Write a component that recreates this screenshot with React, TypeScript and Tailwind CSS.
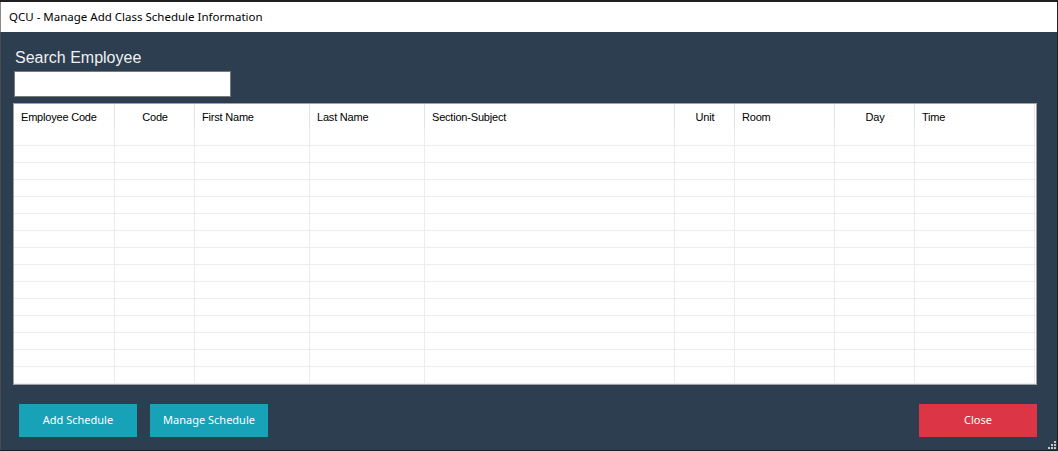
import React from 'react';

const columns = [
  { name: 'Employee Code', w: 'w-[101px]', align: 'text-left' },
  { name: 'Code', w: 'w-[80px]', align: 'text-center' },
  { name: 'First Name', w: 'w-[115px]', align: 'text-left' },
  { name: 'Last Name', w: 'w-[115px]', align: 'text-left' },
  { name: 'Section-Subject', w: 'w-[250px]', align: 'text-left' },
  { name: 'Unit', w: 'w-[60px]', align: 'text-center' },
  { name: 'Room', w: 'w-[100px]', align: 'text-left' },
  { name: 'Day', w: 'w-[80px]', align: 'text-center' },
  { name: 'Time', w: 'w-[120px]', align: 'text-left' },
];

const rows = Array.from({ length: 15 }, (_, i) => i);

const uiFont = { fontFamily: '"Noto Sans", sans-serif' };

export default function App() {
  return (
    <div className="w-[1058px] h-[451px] flex flex-col bg-[#1f1f1f] overflow-hidden" style={{ fontFamily: '"Liberation Sans", Arial, sans-serif' }}>
      <div className="h-[2px] shrink-0" />
      <div className="h-[30px] shrink-0 bg-white border-l border-[#8a8a8a] mr-[1px] flex items-center pl-[8px]">
        <span className="text-[11.5px] text-black" style={uiFont}>
          QCU - Manage Add Class Schedule Information
        </span>
      </div>
      <div className="flex-1 bg-[#2c3e50] border-l border-[#4a4a4a] mr-[1px] mb-[1px] relative flex flex-col pl-[12px] pr-[20px]">
        <div className="mt-[15px] ml-[2px] text-[16px] leading-[22px] text-[#f0f0f0]">Search Employee</div>
        <div className="mt-[2px] ml-[1px] w-[217px] h-[26px] bg-white border border-[#7a7a7a]" />
        <div className="mt-[6px] w-[1024px] h-[282px] bg-white border border-[#a0a0a0] flex flex-col overflow-hidden">
          <div className="flex h-[25px] shrink-0">
            {columns.map((c) => (
              <div key={c.name} className={`${c.w} shrink-0 border-r border-[#e3e3e3] ${c.align} pl-[7px] pr-[6px] pt-[7px] text-[11px] tracking-[-0.2px] text-black leading-[13px]`}>
                {c.name}
              </div>
            ))}
          </div>
          {rows.map((r) => (
            <div key={r} className="flex h-[17px] shrink-0 border-b border-[#ececec]">
              {columns.map((c) => (
                <div key={c.name} className={`${c.w} shrink-0 border-r border-[#ececec]`} />
              ))}
            </div>
          ))}
        </div>
        <div className="mt-[19px] flex items-center pl-[6px]" style={uiFont}>
          <button className="w-[118px] h-[33px] bg-[#17a2b8] text-white text-[11px]">Add Schedule</button>
          <button className="ml-[13px] w-[118px] h-[33px] bg-[#17a2b8] text-white text-[11px]">Manage Schedule</button>
          <button className="ml-auto w-[118px] h-[33px] bg-[#dc3545] text-white text-[11px]">Close</button>
        </div>
        <svg className="absolute right-[1px] bottom-[1px]" width="8" height="8" viewBox="0 0 8 8">
          <rect x="6" y="0" width="2" height="2" fill="#c8c8c8" />
          <rect x="3" y="3" width="2" height="2" fill="#c8c8c8" />
          <rect x="6" y="3" width="2" height="2" fill="#c8c8c8" />
          <rect x="0" y="6" width="2" height="2" fill="#c8c8c8" />
          <rect x="3" y="6" width="2" height="2" fill="#c8c8c8" />
          <rect x="6" y="6" width="2" height="2" fill="#c8c8c8" />
        </svg>
      </div>
    </div>
  );
}
